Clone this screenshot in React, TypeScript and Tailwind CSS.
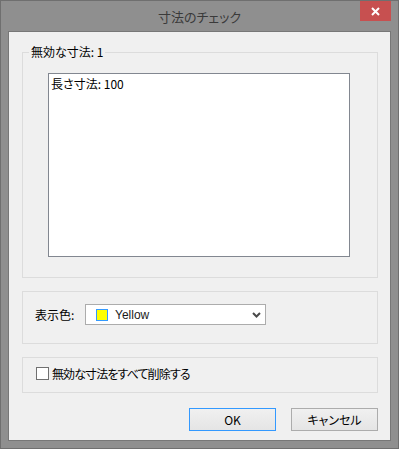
const JP = "font-['Noto_Sans_CJK_JP',sans-serif] [font-feature-settings:'palt']";

function GroupBox({
  className,
  legend,
  children,
}: {
  className: string;
  legend?: string;
  children: React.ReactNode;
}) {
  return (
    <div className={`relative border border-[#dcdcdc] ${className}`}>
      {legend && (
        <span className="absolute left-[6px] -top-[9px] bg-[#f0f0f0] px-[2px] text-[12px] leading-[16px] text-black">
          {legend}
        </span>
      )}
      {children}
    </div>
  );
}

export default function App() {
  return (
    <div
      className={`w-[399px] h-[449px] bg-[#8f8f8f] border border-[#6f6f6f] flex flex-col ${JP}`}
    >
      {/* title bar */}
      <div className="relative h-[30px] shrink-0 flex items-center justify-center">
        <span className="text-[13px] text-[#3a3a3a] pt-[1px]">寸法のチェック</span>
        <button
          type="button"
          aria-label="閉じる"
          className="absolute right-[7px] top-0 w-[31px] h-[20px] bg-[#c75050] flex items-center justify-center"
        >
          <svg width="9" height="9" viewBox="0 0 9 9">
            <path d="M1 1 L8 8 M8 1 L1 8" stroke="#fff" strokeWidth="2" />
          </svg>
        </button>
      </div>

      {/* client area */}
      <div className="flex-1 mx-[7px] mb-[7px] bg-[#f0f0f0] border border-[#777] pl-[13px] pr-[12px] pt-[20px] flex flex-col">
        <GroupBox legend="無効な寸法: 1" className="h-[226px] pl-[25px] pt-[20px]">
          <div className="w-[302px] h-[184px] bg-white border border-[#828790] px-[2px] pt-[2px] text-[12px] leading-[16px] text-black">
            長さ寸法: 100
          </div>
        </GroupBox>

        <GroupBox className="mt-[13px] h-[53px] pl-[12px] pt-[12px] flex items-start">
          <span className="w-[50px] text-[12px] leading-[21px] text-black">表示色:</span>
          <div className="w-[181px] h-[21px] bg-white border border-[#acacac] flex items-center pl-[10px] pr-[4px]">
            <span className="w-[12px] h-[12px] bg-[#ffff00] border border-[#3399ff]" />
            <span className="ml-[7px] font-['Liberation_Sans',sans-serif] text-[12px] text-[#1a1a1a] flex-1">
              Yellow
            </span>
            <svg width="9" height="6" viewBox="0 0 9 6">
              <path d="M1 1 L4.5 4.5 L8 1" stroke="#4a4a4a" strokeWidth="2" fill="none" />
            </svg>
          </div>
        </GroupBox>

        <GroupBox className="mt-[13px] h-[36px] pl-[13px] pt-[9px] flex items-start">
          <span className="w-[13px] h-[13px] bg-white border border-[#707070]" />
          <span className="ml-[3px] text-[12px] leading-[13px] tracking-[-0.9px] text-black">
            無効な寸法をすべて削除する
          </span>
        </GroupBox>

        <div className="mt-[15px] flex justify-end gap-[15px]">
          <button
            type="button"
            className="w-[87px] h-[23px] border border-[#3399ff] bg-gradient-to-b from-[#f0f0f0] to-[#e5e5e5] text-[12px] text-black"
          >
            OK
          </button>
          <button
            type="button"
            className="w-[87px] h-[23px] border border-[#acacac] bg-gradient-to-b from-[#f0f0f0] to-[#e5e5e5] text-[12px] text-black"
          >
            キャンセル
          </button>
        </div>
      </div>
    </div>
  );
}
